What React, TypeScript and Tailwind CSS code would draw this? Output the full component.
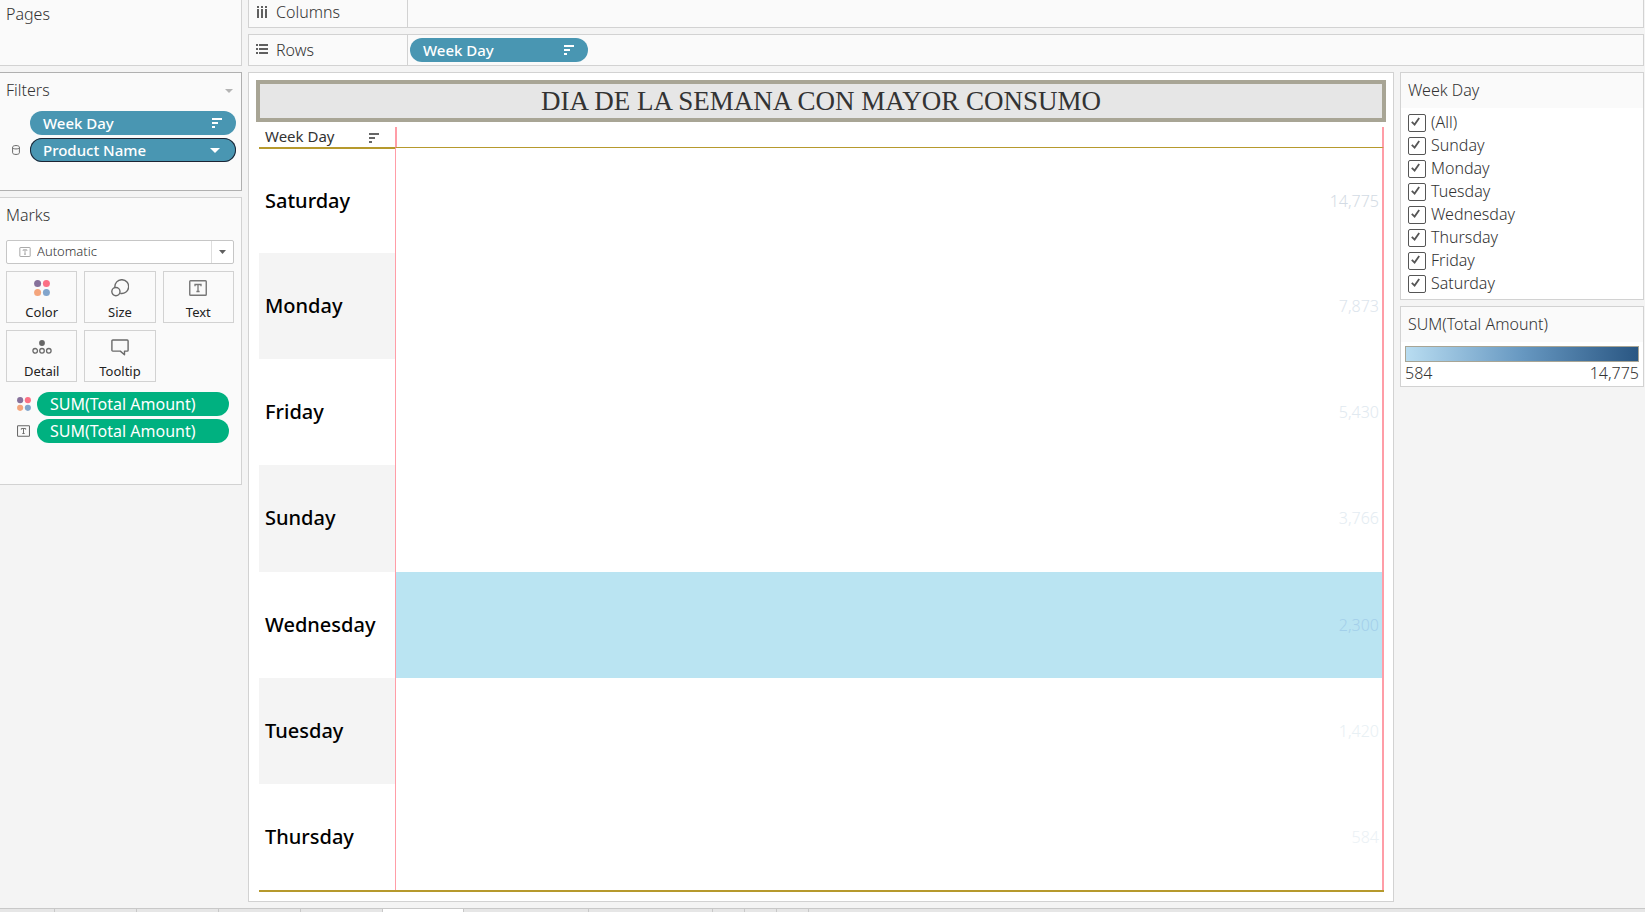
import React from "react";

const UI_FONT = "font-['Noto_Sans','Open_Sans',sans-serif]";

function SortIcon({ className }: { className: string }) {
  return (
    <svg className={className} width="10" height="10" viewBox="0 0 10 10" fill="currentColor" shapeRendering="crispEdges" aria-hidden="true">
      <rect x="0" y="0" width="10" height="2" />
      <rect x="0" y="4" width="6" height="2" />
      <rect x="0" y="8" width="3" height="2" />
    </svg>
  );
}

function CaretIcon({ className }: { className: string }) {
  return (
    <svg className={className} viewBox="0 0 10 5" preserveAspectRatio="none" fill="currentColor" aria-hidden="true">
      <path d="M0 0h10L5 5z" />
    </svg>
  );
}

function ColorDots({ className }: { className: string }) {
  return (
    <svg className={className} viewBox="0 0 16 16" aria-hidden="true">
      <circle cx="3.6" cy="3.6" r="3.5" fill="#86719b" />
      <circle cx="12.4" cy="3.6" r="3.5" fill="#fb7185" />
      <circle cx="3.6" cy="12.4" r="3.5" fill="#f4a57c" />
      <circle cx="12.4" cy="12.4" r="3.5" fill="#82a5cc" />
    </svg>
  );
}

function TextMarkIcon({ className }: { className: string }) {
  return (
    <svg className={className} viewBox="0 0 18 16" fill="none" stroke="currentColor" aria-hidden="true">
      <rect x="0.75" y="0.75" width="16.5" height="14.5" rx="0.8" strokeWidth="1.4" />
      <path d="M6 6.2V4.5h6v1.7M9 4.5v7M7.4 11.5h3.2" strokeWidth="1.3" />
    </svg>
  );
}

function SizeIcon() {
  return (
    <svg width="18" height="18" viewBox="0 0 18 18" fill="none" stroke="#6b6b6b" strokeWidth="1.4" aria-hidden="true">
      <path d="M3.9 8.2A6.9 6.9 0 1 1 9.2 14.3" />
      <circle cx="4.9" cy="12.6" r="4.1" />
    </svg>
  );
}

function DetailIcon() {
  return (
    <svg width="20" height="14" viewBox="0 0 20 14" fill="none" stroke="#6b6b6b" strokeWidth="1.3" aria-hidden="true">
      <circle cx="10" cy="3" r="2.9" fill="#666666" stroke="none" />
      <circle cx="3.2" cy="10.8" r="2.3" />
      <circle cx="10" cy="10.8" r="2.3" />
      <circle cx="16.8" cy="10.8" r="2.3" />
    </svg>
  );
}

function TooltipIcon() {
  return (
    <svg width="18" height="17" viewBox="0 0 18 17" fill="none" stroke="#6b6b6b" strokeWidth="1.4" strokeLinejoin="round" aria-hidden="true">
      <path d="M1.8 1h14.4a.9.9 0 0 1 .9.9v9.3a.9.9 0 0 1-.9.9h-2.7v3.7L9.3 12.1H1.8a.9.9 0 0 1-.9-.9V1.9a.9.9 0 0 1 .9-.9z" />
    </svg>
  );
}

function ColumnsIcon() {
  return (
    <svg width="12" height="12" viewBox="0 0 12 12" fill="#5f5f5f" shapeRendering="crispEdges" aria-hidden="true">
      <path d="M1 0h2v2H1zM5 0h2v2H5zM9 0h2v2H9zM1 3h2v9H1zM5 3h2v9H5zM9 3h2v9H9z" />
    </svg>
  );
}

function RowsIcon() {
  return (
    <svg width="12" height="12" viewBox="0 0 12 12" fill="#5f5f5f" shapeRendering="crispEdges" aria-hidden="true">
      <path d="M0 0h2v2H0zM0 4h2v2H0zM0 8h2v2H0zM3 0h9v2H3zM3 4h9v2H3zM3 8h9v2H3z" />
    </svg>
  );
}

function CylinderIcon() {
  return (
    <svg width="8" height="10" viewBox="0 0 8 10" fill="none" stroke="#6a6a6a" aria-hidden="true">
      <path d="M.6 2.2C.6 0 7.4 0 7.4 2.2v5.6C7.4 10 .6 10 .6 7.8zM.6 2.6c0 1.8 6.8 1.8 6.8 0" />
    </svg>
  );
}

function CardTitle({ children }: { children: React.ReactNode }) {
  return <h2 className="flex h-[35px] items-center pb-0.5 text-base font-light text-[#333333]">{children}</h2>;
}

const PILL = "flex h-6 items-center justify-between rounded-full pr-[14px] pl-[13px] text-white";
const DIMENSION_PILL = `${PILL} bg-[#4996b2] text-[15px] font-medium`;
const MEASURE_PILL = `${PILL} bg-[#00b180] text-base font-normal`;

const MARKS = [
  { label: "Color", icon: <ColorDots className="size-4" /> },
  { label: "Size", icon: <SizeIcon /> },
  { label: "Text", icon: <TextMarkIcon className="h-4 w-[18px] text-[#777777]" /> },
  { label: "Detail", icon: <DetailIcon /> },
  { label: "Tooltip", icon: <TooltipIcon /> },
];

const ROWS = [
  { day: "Saturday", value: "14,775", tone: "text-[#d3dbe4]" },
  { day: "Monday", value: "7,873", tone: "text-[#dde5ed]" },
  { day: "Friday", value: "5,430", tone: "text-[#e1e9f0]" },
  { day: "Sunday", value: "3,766", tone: "text-[#e4ecf2]" },
  { day: "Wednesday", value: "2,300", tone: "text-[#a3cfea]", selected: true },
  { day: "Tuesday", value: "1,420", tone: "text-[#e8f0f4]" },
  { day: "Thursday", value: "584", tone: "text-[#ebf1f5]" },
];

const DAYS = ["(All)", "Sunday", "Monday", "Tuesday", "Wednesday", "Thursday", "Friday", "Saturday"];

const TABS = ["w-[55px]", "w-[82px]", "w-[82px]", "w-[82px]", "w-[82px]", "w-[81px]", "w-[125px]", "w-[124px]", "w-8", "w-8", "w-8"];

function LeftPane() {
  return (
    <aside className="flex w-[242px] shrink-0 flex-col gap-1.5">
      <section className="h-[66px] border-r border-b border-[#d2d2d2] bg-[#fafafa] pl-1.5">
        <h2 className="text-base leading-7 font-light text-[#333333]">Pages</h2>
      </section>

      <section className="border-y border-r border-[#b0b0b0] bg-[#fafafa] pr-[5px] pb-7 pl-1.5">
        <div className="flex items-center justify-between">
          <CardTitle>Filters</CardTitle>
          <button type="button" aria-label="Filter options" className="px-[3px] text-[#b4b4b4]">
            <CaretIcon className="h-1 w-2" />
          </button>
        </div>
        <div className="flex flex-col gap-[3px] pt-[3px]">
          <div className="flex items-center">
            <span className="w-6" />
            <button type="button" className={`${DIMENSION_PILL} flex-1`}>
              Week Day
              <SortIcon className="" />
            </button>
          </div>
          <div className="flex items-center">
            <span className="flex w-6 pl-1.5">
              <CylinderIcon />
            </span>
            <button type="button" className={`${DIMENSION_PILL} flex-1 ring-1 ring-[#1d2433] ring-inset`}>
              Product Name
              <CaretIcon className="mr-0.5 h-[5px] w-[10px]" />
            </button>
          </div>
        </div>
      </section>

      <section className="border-y border-r border-[#d2d2d2] bg-[#fafafa] pr-[7px] pb-[41px] pl-1.5">
        <CardTitle>Marks</CardTitle>
        <div className="relative mt-[7px]">
          <select
            aria-label="Mark type"
            className="block h-6 w-full appearance-none rounded-[2px] border border-[#c6c6c6] bg-white pl-[30px] text-[13px] font-light text-[#333333]"
          >
            <option>Automatic</option>
          </select>
          <TextMarkIcon className="pointer-events-none absolute top-[7px] left-[13px] h-[10px] w-3 text-[#9a9a9a]" />
          <span className="pointer-events-none absolute inset-y-px right-px flex w-[22px] items-center justify-center border-l border-[#dedede] text-[#5f5f5f]">
            <CaretIcon className="h-1 w-[7px]" />
          </span>
        </div>
        <div className="mt-[7px] grid grid-cols-3 gap-[7px]">
          {MARKS.map((mark) => (
            <button
              key={mark.label}
              type="button"
              className="flex h-[52px] flex-col items-center border border-[#d2d2d2] bg-[#fafafa] text-[13px] leading-5 text-[#222222]"
            >
              <span className="flex h-[30px] items-center pt-0.5">{mark.icon}</span>
              {mark.label}
            </button>
          ))}
        </div>
        <div className="mt-2.5 flex flex-col gap-[3px] pr-[5px]">
          <div className="flex items-center">
            <span className="flex w-[31px] pl-[11px]">
              <ColorDots className="size-[14px]" />
            </span>
            <button type="button" className={`${MEASURE_PILL} flex-1`}>
              SUM(Total Amount)
            </button>
          </div>
          <div className="flex items-center">
            <span className="flex w-[31px] pl-[11px]">
              <TextMarkIcon className="h-3 w-[13px] text-[#666666]" />
            </span>
            <button type="button" className={`${MEASURE_PILL} flex-1`}>
              SUM(Total Amount)
            </button>
          </div>
        </div>
      </section>
    </aside>
  );
}

function Shelves() {
  return (
    <div className="flex flex-col gap-1.5 text-base font-light text-[#333333]">
      <div className="flex h-7 border-x border-b border-[#d2d2d2] bg-[#fafafa]">
        <div className="flex w-[159px] items-center gap-2 border-r border-[#d2d2d2] pb-1 pl-[7px]">
          <ColumnsIcon />
          Columns
        </div>
      </div>
      <div className="flex h-8 border border-[#d2d2d2] bg-[#fafafa]">
        <div className="flex w-[159px] items-center gap-2 border-r border-[#d2d2d2] pl-[7px]">
          <RowsIcon />
          Rows
        </div>
        <div className="flex items-center pl-0.5">
          <button type="button" className={`${DIMENSION_PILL} w-[178px]`}>
            Week Day
            <SortIcon className="" />
          </button>
        </div>
      </div>
    </div>
  );
}

function Sheet() {
  return (
    <section className="flex min-w-0 flex-1 flex-col border border-[#d2d2d2] bg-white px-[7px] pt-[7px] pb-[9px]">
      <h1 className="flex h-[42px] items-center justify-center border-4 border-[#a8a595] bg-[#e6e6e6] font-['Liberation_Serif',serif] text-[27px] leading-8 text-[#333333]">
        DIA DE LA SEMANA CON MAYOR CONSUMO
      </h1>
      <div className="mt-[5px] mr-0.5 ml-[3px] flex-1 border-b-2 border-[#b6992d]">
        <table className="h-full w-full border-separate border-spacing-0">
          <thead>
            <tr className="h-5">
              <th scope="col" className="h-5 w-[136px] p-0 text-left">
                <div className="flex h-5 items-center justify-between pr-4 pb-0.5 pl-1.5 text-[15px] leading-[18px] font-normal text-[#333333]">
                  Week Day
                  <SortIcon className="mt-1 text-[#666666]" />
                </div>
              </th>
              <th scope="col" aria-label="Total Amount" className="border-r-2 border-l-2 border-[#ff9da7] p-0" />
            </tr>
          </thead>
          <tbody>
            {ROWS.map((row) => (
              <tr key={row.day} className="group h-[106px]">
                <th
                  scope="row"
                  className="p-0 pl-1.5 text-left text-xl font-medium text-black group-first:border-t-2 group-first:border-[#b6992d] group-even:bg-[#f4f4f4]"
                >
                  {row.day}
                </th>
                <td
                  className={`border-r-2 border-l border-[#ff9da7] p-0 pr-[3px] text-right text-base font-light group-first:border-t group-first:border-t-[#b6992d] ${row.tone} ${row.selected ? "bg-[#bae4f2]" : "bg-white"}`}
                >
                  {row.value}
                </td>
              </tr>
            ))}
          </tbody>
        </table>
      </div>
    </section>
  );
}

function RightPane() {
  return (
    <aside className="flex w-[244px] shrink-0 flex-col gap-1.5">
      <section className="border border-[#d2d2d2] bg-white">
        <div className="bg-[#fafafa] pl-[7px]">
          <CardTitle>Week Day</CardTitle>
        </div>
        <div className="pt-[3px] pb-1 pl-[7px]">
          {DAYS.map((day) => (
            <label key={day} className="flex h-[23px] items-center gap-[5px] text-base font-light text-[#333333]">
              <span className="relative flex">
                <input
                  type="checkbox"
                  defaultChecked
                  className="peer size-[18px] appearance-none rounded-[2px] border border-[#555555] bg-white"
                />
                <svg
                  className="pointer-events-none absolute inset-0 hidden peer-checked:block"
                  width="18"
                  height="18"
                  viewBox="0 0 18 18"
                  fill="none"
                  stroke="#555555"
                  strokeWidth="1.8"
                  aria-hidden="true"
                >
                  <path d="M3.8 7.8l2.8 2.8L11.2 4" />
                </svg>
              </span>
              <span className="pb-0.5">{day}</span>
            </label>
          ))}
        </div>
      </section>

      <section className="border border-[#d2d2d2] bg-white">
        <div className="bg-[#fafafa] pl-[7px]">
          <CardTitle>SUM(Total Amount)</CardTitle>
        </div>
        <div className="px-1 pt-1 pb-0.5">
          <div className="h-4 border border-[#a8a595] bg-linear-to-r from-[#b9ddf1] via-[#6798c1] to-[#2a5783]" />
          <div className="flex justify-between text-base leading-[22px] font-light text-[#333333]">
            <span>584</span>
            <span>14,775</span>
          </div>
        </div>
      </section>
    </aside>
  );
}

export default function App() {
  return (
    <div className={`flex h-screen flex-col bg-[#f4f4f4] ${UI_FONT}`}>
      <main className="flex min-h-0 flex-1 gap-1.5 pr-px pb-1.5">
        <LeftPane />
        <div className="flex min-w-0 flex-1 flex-col gap-1.5">
          <Shelves />
          <div className="flex flex-1 gap-1.5">
            <Sheet />
            <RightPane />
          </div>
        </div>
      </main>
      <nav aria-label="Sheets" className="flex h-1 border-t border-[#c8c8c8] bg-[#e6e6e6]">
        {TABS.map((width, i) => (
          <button
            key={i}
            type="button"
            aria-label={`Sheet ${i + 1}`}
            className={`${width} border-r border-[#c8c8c8] ${i === 5 ? "bg-white" : ""}`}
          />
        ))}
      </nav>
    </div>
  );
}
